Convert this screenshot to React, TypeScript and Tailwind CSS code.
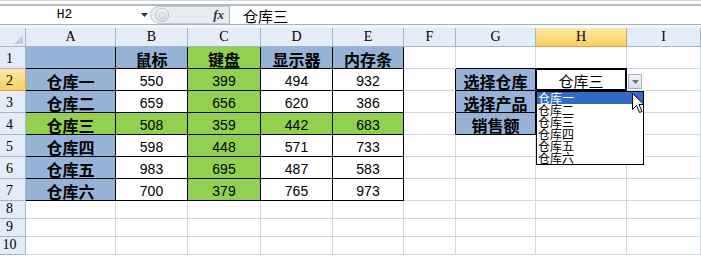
import React from 'react'

const cjk = "font-['Noto_Sans_CJK_SC',sans-serif]"
const mono = "font-['Liberation_Mono',monospace]"
const sans = "font-['Liberation_Sans',sans-serif]"
const serif = "font-['Liberation_Serif',serif]"

const cols = ['A', 'B', 'C', 'D', 'E', 'F', 'G', 'H', 'I']
const heads = ['', '鼠标', '键盘', '显示器', '内存条']
const stores = ['仓库一', '仓库二', '仓库三', '仓库四', '仓库五', '仓库六']
const nums = [
  ['550', '399', '494', '932'],
  ['659', '656', '620', '386'],
  ['508', '359', '442', '683'],
  ['598', '448', '571', '733'],
  ['983', '695', '487', '583'],
  ['700', '379', '765', '973'],
]
const labels = ['选择仓库', '选择产品', '销售额']

type Cell = { t: string; bg: string; bold: boolean; rb: boolean; bb: boolean; sel?: boolean }

function cellFor(r: number, c: number): Cell {
  const cell: Cell = { t: '', bg: 'bg-white', bold: false, rb: false, bb: false }
  if (r <= 7 && c <= 4) {
    cell.rb = true
    cell.bb = true
    if (r === 1) {
      cell.t = heads[c]
      cell.bold = true
      cell.bg = c === 2 ? 'bg-[#92d050]' : 'bg-[#95b3d7]'
    } else if (c === 0) {
      cell.t = stores[r - 2]
      cell.bold = true
      cell.bg = r === 4 ? 'bg-[#92d050]' : 'bg-[#95b3d7]'
    } else {
      cell.t = nums[r - 2][c - 1]
      cell.bg = r === 4 || c === 2 ? 'bg-[#92d050]' : 'bg-white'
    }
  }
  if (c === 5 && r >= 2 && r <= 4) cell.rb = true
  if (c === 6 && r === 1) cell.bb = true
  if (c === 6 && r >= 2 && r <= 4) {
    cell.t = labels[r - 2]
    cell.bold = true
    cell.bg = 'bg-[#95b3d7]'
    cell.rb = true
    cell.bb = true
  }
  if (c === 7 && r === 2) {
    cell.t = '仓库三'
    cell.sel = true
  }
  return cell
}

function FormulaBar() {
  return (
    <div className="h-[28px] bg-white">
      <div className="h-[6px] border-t border-[#cfd3d9] border-b-2 border-b-[#b5bbc3]" />
      <div className="h-[18px] flex items-stretch">
        <div className={`w-[129px] flex items-center justify-center text-[13px] ${mono}`}>H2</div>
        <div className="w-[21px] flex items-center pl-[12px]">
          <svg width="7" height="4" viewBox="0 0 7 4">
            <path d="M0 0H7L3.5 4Z" fill="#333" />
          </svg>
        </div>
        <div className="w-[79px] relative flex items-center bg-[#e8edf4] rounded-l-[9px] border-y border-l border-[#c3cad3]">
          <div className="ml-[4px] w-[14px] h-[14px] rounded-full border border-[#b9c0c9] bg-gradient-to-b from-[#fafbfd] to-[#d7dde6] flex items-center justify-center">
            <div className="w-[8px] h-[8px] rounded-full bg-[#e1e6ed] border border-[#c9cfd8]" />
          </div>
          <span className={`ml-auto mr-[5px] italic font-bold text-[13px] text-[#333] ${serif}`}>fx</span>
        </div>
        <div className={`flex-1 border-l border-[#aeb6c0] flex items-center pl-[13px] text-[15px] leading-none ${cjk}`}>仓库三</div>
      </div>
      <div className="h-px bg-[#a7b0bb]" />
      <div className="h-[3px] bg-[#f4f6f9]" />
    </div>
  )
}

function Sheet() {
  const rows = [1, 2, 3, 4, 5, 6, 7, 8, 9, 10]
  return (
    <div className="grid grid-cols-[26px_90px_72px_73px_72px_71px_52px_80px_91px_74px] grid-rows-[19px_repeat(7,22px)_repeat(3,18px)]">
      <div className="border-r border-b border-[#9eb6ce] bg-[#e4ecf7] flex items-end justify-end p-[2px]">
        <svg width="9" height="9" viewBox="0 0 9 9">
          <path d="M9 0V9H0Z" fill="#c3cbd6" />
        </svg>
      </div>
      {cols.map((c, i) => (
        <div
          key={c}
          className={`border-r border-b flex items-center justify-center text-[14px] leading-none ${serif} ${
            i === 7
              ? 'bg-gradient-to-b from-[#fde8a6] to-[#f9cd60] border-[#e2a13e]'
              : 'bg-[#e4ecf7] border-[#9eb6ce]'
          }`}
        >
          {c}
        </div>
      ))}
      {rows.map((r) => (
        <React.Fragment key={r}>
          <div
            className={`border-r border-b flex items-end justify-center pr-[6px] pb-[2px] text-[14px] leading-none ${serif} ${
              r === 2
                ? 'bg-gradient-to-b from-[#fde8a6] to-[#f9cd60] border-[#e2a13e]'
                : 'bg-[#e4ecf7] border-[#9eb6ce]'
            }`}
          >
            {r}
          </div>
          {cols.map((_, c) => {
            const cell = cellFor(r, c)
            const isNum = /^[0-9]+$/.test(cell.t)
            return (
              <div
                key={c}
                className={`relative border-r border-b flex items-center justify-center pt-[2px] leading-none ${cell.bg} ${
                  cell.rb ? 'border-r-black' : 'border-r-[#d0d7e5]'
                } ${cell.bb ? 'border-b-black' : 'border-b-[#d0d7e5]'} ${
                  isNum ? `text-[14px] ${sans}` : `${cell.bold ? 'text-[16px] font-bold' : 'text-[15px]'} ${cjk}`
                }`}
              >
                {cell.t}
                {cell.sel && <div className="absolute -left-px -top-px right-[-1px] bottom-[-1px] border-2 border-black" />}
              </div>
            )
          })}
        </React.Fragment>
      ))}
    </div>
  )
}

function Dropdown() {
  return (
    <>
      <div className="absolute left-[628px] top-[74px] w-[14px] h-[15px] border border-[#a9b1bc] bg-gradient-to-b from-[#f3f5f8] to-[#d9dee5] flex items-center justify-center">
        <svg width="7" height="4" viewBox="0 0 7 4">
          <path d="M0 0H7L3.5 4Z" fill="#6b7380" />
        </svg>
      </div>
      <div className={`absolute left-[536px] top-[91px] w-[108px] h-[74px] bg-white border border-black flex flex-col text-[12px] leading-[12px] ${cjk}`}>
        {stores.map((s, i) => (
          <div key={s} className={`h-[12px] pl-[1px] ${i === 0 ? 'bg-[#316ac5] text-white' : 'text-black'}`}>
            {s}
          </div>
        ))}
      </div>
      <svg className="absolute left-[632px] top-[93px]" width="13" height="21" viewBox="0 0 13 21">
        <path d="M0.5 0.5V16.5L4.5 12.5L7.5 19.5L10 18.5L7 11.5H12Z" fill="white" stroke="black" strokeWidth="1" strokeLinejoin="round" />
      </svg>
    </>
  )
}

export default function App() {
  return (
    <div className="relative w-[701px] h-[256px] overflow-hidden bg-white text-black">
      <FormulaBar />
      <Sheet />
      <Dropdown />
    </div>
  )
}
